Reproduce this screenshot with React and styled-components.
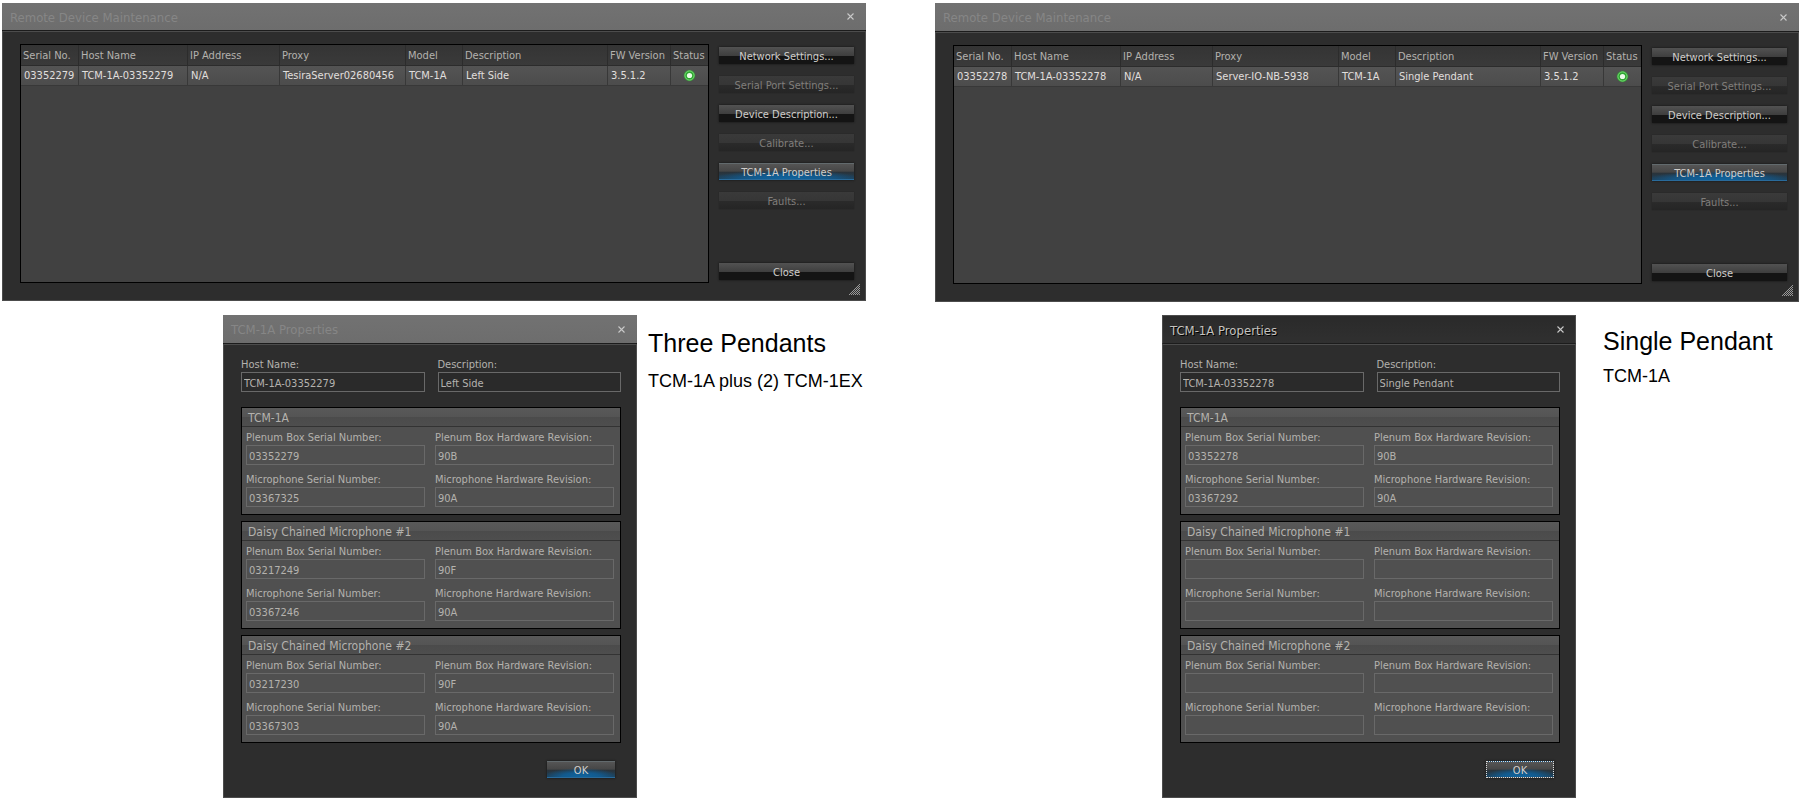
import React, { useId } from "react";
import styled, { createGlobalStyle, css } from "styled-components";

const GlobalStyle = createGlobalStyle`
  *, *::before, *::after { box-sizing: border-box; }
  body {
    margin: 0;
    background: #fff;
    color: #b4b2ae;
    font-family: "DejaVu Sans Condensed", "DejaVu Sans", Tahoma, sans-serif;
    font-size: 11px;
    line-height: 14px;
  }
  button, input { font: inherit; color: inherit; margin: 0; }
`;

const Page = styled.main`
  display: grid;
  grid-template-columns: repeat(2, minmax(0, 1fr));
  column-gap: 69px;
  row-gap: 13px;
  align-items: start;
  padding: 3px 1px 2px 2px;
`;

const Window = styled.section`
  position: relative;
  background: #2d2d2d;
`;

const TitleBar = styled.header`
  display: flex;
  align-items: center;
  justify-content: space-between;
  height: ${(p) => (p.$tall ? 29 : 28)}px;
  padding: 0 10px 0 8px;
  border-bottom: 1px solid #1c1c1c;
  background: linear-gradient(#727272, #6d6d6d);
  color: #868686;
  ${(p) =>
    p.$active &&
    css`
      border-top: 1px solid #4c4c4c;
      border-left: 1px solid #4c4c4c;
      border-right: 1px solid #4c4c4c;
      background: linear-gradient(#2a2a2a, #303030);
      color: #c4c2be;
      text-shadow: 1px 1px 0 #000;
      padding: 0 9px 0 7px;
    `}
`;

const Title = styled.h2`
  margin: 0;
  padding-top: 2px;
  font-size: 13px;
  line-height: 18px;
  font-weight: 400;
`;

const CloseButton = styled.button`
  display: flex;
  align-items: center;
  justify-content: center;
  width: 11px;
  height: 11px;
  padding: 0;
  border: 0;
  background: none;
  color: #c9c9c9;
`;

const WindowBody = styled.div`
  border: 1px solid #4c4c4c;
`;

const MaintenanceBody = styled(WindowBody)`
  display: flex;
  gap: 10px;
  height: 270px;
  padding: 12px 11px 17px 17px;
`;

const DeviceList = styled.div`
  flex: 1;
  min-width: 0;
  border: 1px solid #000;
  background: #414141;
`;

const Table = styled.table`
  width: 100%;
  table-layout: fixed;
  border-collapse: separate;
  border-spacing: 0;
  text-align: left;
  white-space: nowrap;
`;

const HeadCell = styled.th`
  height: 21px;
  padding: 1px 0 0 2px;
  font-weight: 400;
  background: linear-gradient(#343434, #3a3a3a);
  border-right: 1px solid #2c2c2c;
  border-bottom: 1px solid #2c2c2c;
  &:last-child { border-right: 0; }
`;

const Cell = styled.td`
  height: 20px;
  padding: 1px 0 0 3px;
  color: #e0dfdd;
  background: linear-gradient(#545454, #4c4c4c);
  border-right: 1px solid #383838;
  border-bottom: 1px solid #383838;
  &:last-child { border-right: 0; padding: 0; }
`;

const StatusIcon = styled.svg`
  display: block;
  margin: 0 auto;
`;

const Actions = styled.div`
  display: flex;
  flex-direction: column;
  gap: 12px;
  width: 135px;
  padding: 3px 0;
`;

const PushButton = styled.button`
  height: 17px;
  padding: 2px 0 0;
  line-height: 14px;
  border: 0;
  color: #d0cecb;
  background: linear-gradient(#525252, #3f3f3f 50%, #141414 54%, #141414);
  box-shadow: 0 0 2px #111;
  &:disabled {
    color: #807e7b;
    background: linear-gradient(#3a3a3a, #363636 50%, #2a2a2a 56%, #252525);
    box-shadow: 0 0 1px #222;
  }
  ${(p) =>
    p.$primary &&
    css`
      padding: 1px 0 0;
      line-height: 13px;
      border-top: 1px solid #626a6d;
      border-bottom: 1px solid #2a6b9b;
      background: radial-gradient(ellipse 56% 60% at 50% 100%, #0f659f 0%, #125a8e 50%, transparent 100%),
        linear-gradient(#555, #464646 48%, #2a333a 54%, #1f3f56);
    `}
  ${(p) => p.$last && css`margin-top: auto;`}
  ${(p) =>
    p.$focused &&
    css`
      border: 1px dotted #ddd;
    `}
`;

const Grip = styled.svg`
  position: absolute;
  right: 6px;
  bottom: 6px;
`;

const DetailRow = styled.div`
  display: grid;
  grid-template-columns: ${(p) => p.$columns};
  align-items: start;
`;

const PropertiesBody = styled(WindowBody)`
  padding: 12px 15px 19px 17px;
`;

const Pair = styled.div`
  display: grid;
  grid-template-columns: 1fr 1fr;
  column-gap: ${(p) => p.$gap}px;
`;

const FieldBox = styled.div`
  display: flex;
  flex-direction: column;
`;

const Label = styled.label`
  height: 15px;
  line-height: 16px;
`;

const Input = styled.input`
  width: 100%;
  height: 20px;
  padding: 2px 2px 0;
  border: 1px solid #696969;
  border-radius: 0;
  background: ${(p) => (p.$inset ? "#505050" : "#2a2a2a")};
  outline: 0;
`;

const Groups = styled.div`
  display: grid;
  gap: 6px;
  margin-top: 15px;
`;

const Group = styled.fieldset`
  min-width: 0;
  margin: 0;
  padding: 0;
  border: 1px solid #000;
  background: #505050;
`;

const GroupTitle = styled.h3`
  margin: 0;
  height: 19px;
  padding: 1px 6px 0;
  font-size: 12px;
  line-height: 18px;
  font-weight: 400;
  border-bottom: 1px solid #333;
  background: linear-gradient(#595959, #545454 50%, #4b4b4b 51%, #4e4e4e);
`;

const GroupFields = styled.div`
  display: grid;
  row-gap: 7px;
  padding: 3px 6px 7px 4px;
`;

const Footer = styled.footer`
  display: flex;
  justify-content: flex-end;
  margin-top: 18px;
  padding-right: 6px;
  ${PushButton} { width: 68px; }
`;

const Note = styled.div`
  padding: ${(p) => p.$top}px 0 0 ${(p) => p.$left}px;
  color: #000;
  font-family: "Liberation Sans", Arial, sans-serif;
  white-space: nowrap;
`;

const NoteTitle = styled.h1`
  margin: 0;
  font-size: 25px;
  line-height: 28px;
  font-weight: 400;
`;

const NoteText = styled.p`
  margin: ${(p) => p.$gap}px 0 0;
  font-size: 18px;
  line-height: 22px;
`;

function CloseX() {
  return (
    <CloseButton aria-label="Close window">
      <svg width="7" height="7" viewBox="0 0 7 7" aria-hidden="true">
        <path d="M.5.5 6.5 6.5M6.5.5.5 6.5" stroke="currentColor" strokeWidth="1.1" />
      </svg>
    </CloseButton>
  );
}

function StatusLight() {
  return (
    <StatusIcon width="13" height="13" viewBox="0 0 13 13" role="img" aria-label="OK">
      <circle cx="6.5" cy="6.5" r="6" fill="#3f7a3f" opacity=".55" />
      <circle cx="6.5" cy="6.5" r="5.3" fill="#2fa832" />
      <circle cx="6.5" cy="6.5" r="4.6" fill="none" stroke="#7fdc7c" strokeWidth=".9" />
      <circle cx="6.5" cy="6.5" r="2.6" fill="#eafbe8" />
    </StatusIcon>
  );
}

function ResizeGrip() {
  const dots = [];
  for (let y = 0; y < 11; y += 1) {
    for (let x = 10 - y; x < 11; x += 1) {
      if ((x + y) % 2 === 0) dots.push(<rect key={`${x}-${y}`} x={x} y={y} width="1" height="1" />);
    }
  }
  return (
    <Grip width="11" height="11" viewBox="0 0 11 11" fill="#9a9a9a" aria-hidden="true">
      {dots}
    </Grip>
  );
}

function Field({ label, value, inset }) {
  const id = useId();
  return (
    <FieldBox>
      <Label htmlFor={id}>{label}</Label>
      <Input id={id} defaultValue={value} readOnly={inset} $inset={inset} />
    </FieldBox>
  );
}

const COLUMNS = [
  ["Serial No.", 58],
  ["Host Name", 109],
  ["IP Address", 92],
  ["Proxy", 126],
  ["Model", 57],
  ["Description", null],
  ["FW Version", 63],
  ["Status", 37],
];

function MaintenanceWindow({ device, tall }) {
  return (
    <Window>
      <TitleBar $tall={tall}>
        <Title>Remote Device Maintenance</Title>
        <CloseX />
      </TitleBar>
      <MaintenanceBody>
        <DeviceList>
          <Table>
            <colgroup>
              {COLUMNS.map(([name, width]) => (
                <col key={name} width={width ?? undefined} />
              ))}
            </colgroup>
            <thead>
              <tr>
                {COLUMNS.map(([name]) => (
                  <HeadCell key={name} scope="col">{name}</HeadCell>
                ))}
              </tr>
            </thead>
            <tbody>
              <tr>
                {device.map((text) => (
                  <Cell key={text}>{text}</Cell>
                ))}
                <Cell><StatusLight /></Cell>
              </tr>
            </tbody>
          </Table>
        </DeviceList>
        <Actions>
          <PushButton>Network Settings...</PushButton>
          <PushButton disabled>Serial Port Settings...</PushButton>
          <PushButton>Device Description...</PushButton>
          <PushButton disabled>Calibrate...</PushButton>
          <PushButton $primary>TCM-1A Properties</PushButton>
          <PushButton disabled>Faults...</PushButton>
          <PushButton $last>Close</PushButton>
        </Actions>
      </MaintenanceBody>
      <ResizeGrip />
    </Window>
  );
}

function PropertiesWindow({ host, description, groups, active }) {
  return (
    <Window>
      <TitleBar $tall $active={active}>
        <Title>TCM-1A Properties</Title>
        <CloseX />
      </TitleBar>
      <PropertiesBody>
        <Pair $gap={13}>
          <Field label="Host Name:" value={host} />
          <Field label="Description:" value={description} />
        </Pair>
        <Groups>
          {groups.map(([name, boxSerial, boxRev, micSerial, micRev]) => (
            <Group key={name} aria-label={name}>
              <GroupTitle>{name}</GroupTitle>
              <GroupFields>
                <Pair $gap={10}>
                  <Field inset label="Plenum Box Serial Number:" value={boxSerial} />
                  <Field inset label="Plenum Box Hardware Revision:" value={boxRev} />
                </Pair>
                <Pair $gap={10}>
                  <Field inset label="Microphone Serial Number:" value={micSerial} />
                  <Field inset label="Microphone Hardware Revision:" value={micRev} />
                </Pair>
              </GroupFields>
            </Group>
          ))}
        </Groups>
        <Footer>
          <PushButton $primary $focused={active}>OK</PushButton>
        </Footer>
      </PropertiesBody>
    </Window>
  );
}

const THREE = [
  ["TCM-1A", "03352279", "90B", "03367325", "90A"],
  ["Daisy Chained Microphone #1", "03217249", "90F", "03367246", "90A"],
  ["Daisy Chained Microphone #2", "03217230", "90F", "03367303", "90A"],
];

const SINGLE = [
  ["TCM-1A", "03352278", "90B", "03367292", "90A"],
  ["Daisy Chained Microphone #1", "", "", "", ""],
  ["Daisy Chained Microphone #2", "", "", "", ""],
];

export default function App() {
  return (
    <>
      <GlobalStyle />
      <Page>
        <MaintenanceWindow
          device={["03352279", "TCM-1A-03352279", "N/A", "TesiraServer02680456", "TCM-1A", "Left Side", "3.5.1.2"]}
        />
        <MaintenanceWindow
          tall
          device={["03352278", "TCM-1A-03352278", "N/A", "Server-IO-NB-5938", "TCM-1A", "Single Pendant", "3.5.1.2"]}
        />
        <DetailRow $columns="221fr 414fr 229fr">
          <span />
          <PropertiesWindow host="TCM-1A-03352279" description="Left Side" groups={THREE} />
          <Note $top={14} $left={11}>
            <NoteTitle>Three Pendants</NoteTitle>
            <NoteText $gap={13}>TCM-1A plus (2) TCM-1EX</NoteText>
          </Note>
        </DetailRow>
        <DetailRow $columns="227fr 414fr 223fr">
          <span />
          <PropertiesWindow active host="TCM-1A-03352278" description="Single Pendant" groups={SINGLE} />
          <Note $top={12} $left={27}>
            <NoteTitle>Single Pendant</NoteTitle>
            <NoteText $gap={10}>TCM-1A</NoteText>
          </Note>
        </DetailRow>
      </Page>
    </>
  );
}
